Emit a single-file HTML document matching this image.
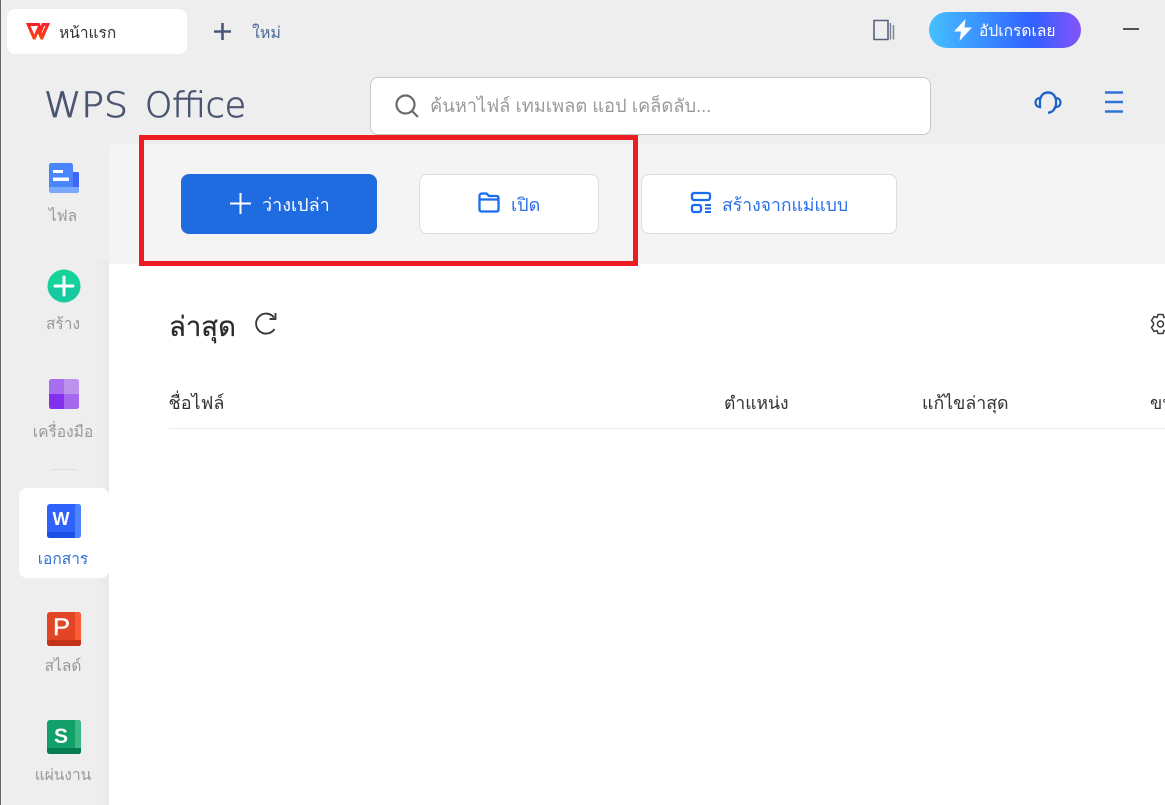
<!DOCTYPE html>
<html lang="th"><head><meta charset="utf-8"><title>WPS Office</title>
<style>
html,body{margin:0;padding:0}
body{width:1165px;height:805px;overflow:hidden;position:relative;background:#eeeeee;font-family:"Liberation Sans","Noto Sans CJK SC","DejaVu Sans",sans-serif;}
.a{position:absolute;white-space:nowrap}
.lbl{position:absolute;width:108px;left:9px;text-align:center;font-size:15.5px;line-height:22px;color:#999;}
svg{position:absolute;overflow:visible}
.btn{position:absolute;top:174px;height:58px;background:#fff;border:1px solid #dcdcdc;border-radius:8px;}
</style></head><body>
<div class="a" style="left:0;top:0;width:1px;height:805px;background:#666"></div>
<div class="a" style="left:94px;top:260px;width:15px;height:545px;background:linear-gradient(90deg,#eeeeee,#e9e9e9)"></div>

<div class="a" style="left:7px;top:9px;width:180px;height:45px;background:#fff;border-radius:8px"></div>
<svg style="left:26px;top:23px" width="24" height="17" viewBox="0 0 24 17"><defs><linearGradient id="wg" x1="0" y1="0" x2="0" y2="1"><stop offset="0" stop-color="#f81a2a"/><stop offset="1" stop-color="#fb4a14"/></linearGradient></defs><path d="M0 0H13.500L14.800 3L16 0H24L17 16.500H14.500L12 10.500L9.500 16.500H7ZM4.500 3L8.300 11.500L12 3ZM16.800 6.500L15.600 9.500L15.900 10.300L19.500 3H18.300Z" fill="url(#wg)" fill-rule="evenodd"/></svg>
<div class="a" style="left:59px;top:23px;font-size:15.5px;line-height:22px;color:#333">หน้าแรก</div>
<svg style="left:213px;top:22px" width="19" height="19"><path d="M9.500 1V18M1 9.500H18" stroke="#4a5878" stroke-width="2.600"/></svg>
<div class="a" style="left:252px;top:22.500px;font-size:16px;line-height:22px;color:#4a6a9a">ใหม่</div>

<svg style="left:873px;top:19px" width="22" height="22"><path d="M1 1.500H15V20.500H1Z" fill="none" stroke="#56637f" stroke-width="1.600"/><path d="M17.500 4V20.500M20.500 6V20.500" stroke="#7a8498" stroke-width="1.400"/></svg>
<div class="a" style="left:929px;top:12px;width:152px;height:36px;border-radius:18px;background:linear-gradient(90deg,#45c0ff 0%,#3a90ff 35%,#3160ff 68%,#8355fa 100%)"></div>
<svg style="left:953px;top:19px" width="20" height="22" viewBox="0 0 20 22"><path d="M12.500 0L1 12.500H8L6.500 22L19 8.500H11.500Z" fill="#fff"/></svg>
<div class="a" style="left:979px;top:21px;font-size:15.600px;line-height:22px;color:#fff">อัปเกรดเลย</div>
<div class="a" style="left:1123px;top:28px;width:16px;height:2px;background:#555"></div>

<svg style="left:45px;top:88px" width="202" height="32"><text x="-1" y="29" font-family="DejaVu Sans, Liberation Sans, sans-serif" font-weight="200" font-size="35" fill="#4a5670" stroke="#4a5670" stroke-width="0.800" textLength="84" lengthAdjust="spacingAndGlyphs">WPS</text><text x="100" y="29" font-family="DejaVu Sans, Liberation Sans, sans-serif" font-weight="200" font-size="35" fill="#4a5670" stroke="#4a5670" stroke-width="0.800" textLength="101" lengthAdjust="spacingAndGlyphs">Office</text></svg>

<div class="a" style="left:370px;top:77px;width:559px;height:56px;background:#fff;border:1px solid #c8c8c8;border-radius:8px"></div>
<svg style="left:395px;top:94px" width="24" height="24"><circle cx="10.500" cy="10.500" r="9" fill="none" stroke="#6a6a6a" stroke-width="2.200"/><path d="M17 17L23 23" stroke="#6a6a6a" stroke-width="2.200"/></svg>
<div class="a" style="left:430px;top:94px;font-size:18.300px;line-height:24px;color:#9a9a9a">ค้นหาไฟล์ เทมเพลต แอป เคล็ดลับ...</div>

<svg style="left:1034px;top:91px" width="28" height="24" viewBox="0 0 28 24"><path d="M6.500 8C7 4 10 1.500 14 1.500S21 4 21.500 8" fill="none" stroke="#1f62c8" stroke-width="2.400"/><path d="M6 6.800C3 7.300 1.500 9 1.500 11.500S3 15.700 6 16.200ZM22 6.800C25 7.300 26.500 9 26.500 11.500S25 15.700 22 16.200Z" fill="none" stroke="#1f62c8" stroke-width="2.200"/><path d="M21.500 15C20.500 19 18.500 21.300 14 21.800" fill="none" stroke="#1f62c8" stroke-width="2.400"/></svg>
<svg style="left:1105px;top:91px" width="18" height="22"><path d="M0 1.500H18M0 11H18M0 20.500H18" stroke="#2f74d8" stroke-width="2.400"/></svg>

<div class="a" style="left:109px;top:144px;width:1056px;height:661px;background:#fff;border-top-left-radius:6px;overflow:hidden"><div style="height:120px;background:#f4f4f4"></div></div>

<div class="a" style="left:181px;top:174px;width:196px;height:60px;background:#1f6be0;border-radius:8px"></div>
<svg style="left:230px;top:193px" width="21" height="21"><path d="M10.500 0V21M0 10.500H21" stroke="#fff" stroke-width="2"/></svg>
<div class="a" style="left:262px;top:192.500px;font-size:18px;line-height:24px;color:#fff">ว่างเปล่า</div>

<div class="btn" style="left:419px;width:178px"></div>
<svg style="left:478px;top:192px" width="22" height="21" viewBox="0 0 22 21"><path d="M1.500 4C1.500 2.500 2.500 1.500 4 1.500H8.500L11 4H18.500C20 4 20.500 5 20.500 6V17.500C20.500 19 19.500 19.500 18.500 19.500H3.500C2.500 19.500 1.500 19 1.500 17.500ZM1.500 7.500H20.500" fill="none" stroke="#1a6cf0" stroke-width="2.300"/></svg>
<div class="a" style="left:511px;top:192.500px;font-size:18px;line-height:24px;color:#2a6fe8">เปิด</div>

<div class="btn" style="left:641px;width:254px"></div>
<svg style="left:690px;top:192px" width="22" height="22"><rect x="2" y="1" width="18" height="7" rx="2" fill="none" stroke="#1a6cf0" stroke-width="2.300"/><rect x="2" y="13" width="9" height="7" rx="2" fill="none" stroke="#1a6cf0" stroke-width="2.300"/><path d="M15 13H21M15 16.500H21M15 20H21" stroke="#1a6cf0" stroke-width="2"/></svg>
<div class="a" style="left:722px;top:192.500px;font-size:17.600px;line-height:24px;color:#2a6fe8">สร้างจากแม่แบบ</div>

<div class="a" style="left:139px;top:135px;width:489px;height:121px;border:5px solid #ed1c24"></div>

<!-- sidebar -->
<svg style="left:49px;top:163px" width="30" height="30"><path d="M24 9H28.500C29.500 9 30 9.500 30 10.500V27C30 29 29 30 27 30H24Z" fill="#3e66f5"/><path d="M2 0H22C23 0 24 1 24 3V30H3C1 30 0 29 0 27V2C0 1 1 0 2 0Z" fill="#4a86fb"/><path d="M0 24H30V27C30 29 29 30 27 30H3C1 30 0 29 0 27Z" fill="#7aa8fc"/><path d="M4 7H14V10H4ZM4 14.500H20V18H4Z" fill="#fff"/></svg>
<div class="lbl" style="top:206px">ไฟล</div>

<svg style="left:47px;top:269px" width="34" height="34"><circle cx="17" cy="17" r="16.500" fill="#14d49c"/><path d="M.8 19A16.500 16.500 0 0 0 33.200 19L33 16.500Z" fill="#17c9a0"/><path d="M17 8V26M8 17H26" stroke="#fff" stroke-width="3" stroke-linecap="round"/></svg>
<div class="lbl" style="top:314px">สร้าง</div>

<svg style="left:49px;top:379px" width="30" height="30"><path d="M3 0H15V15H0V3C0 1 1 0 3 0Z" fill="#a96df0"/><path d="M15 0H27C29 0 30 1 30 3V15H15Z" fill="#bb93ec"/><path d="M0 15H15V30H3C1 30 0 29 0 27Z" fill="#8430ef"/><path d="M15 15H30V27C30 29 29 30 27 30H15Z" fill="#a668ef"/></svg>
<div class="lbl" style="top:422px">เครื่องมือ</div>

<div class="a" style="left:51px;top:469px;width:26px;height:1px;background:#dedede"></div>

<div class="a" style="left:19px;top:488px;width:90px;height:90px;background:#fff;border-radius:8px"></div>
<svg style="left:47px;top:504px" width="34" height="34"><rect width="34" height="34" rx="3" fill="#2f62fb"/><path d="M28 0H31C33 0 34 1 34 3V31C34 33 33 34 31 34H28Z" fill="#4f83fc"/><path d="M0 28H28V34H3C1 34 0 33 0 31Z" fill="#1c50e5"/><text x="14" y="21" text-anchor="middle" font-family="Liberation Sans" font-weight="700" font-size="18" fill="#fff">W</text></svg>
<div class="lbl" style="top:549px;color:#2f6fd8">เอกสาร</div>

<svg style="left:47px;top:612px" width="34" height="34"><rect width="34" height="34" rx="3" fill="#e24526"/><path d="M28 0H31C33 0 34 1 34 3V31C34 33 33 34 31 34H28Z" fill="#fb5d36"/><path d="M0 28H34V31C34 33 33 34 31 34H3C1 34 0 33 0 31Z" fill="#c5321a"/><text x="6" y="23" font-family="Liberation Sans" font-weight="400" font-size="24" fill="#fff" stroke="#fff" stroke-width="0.400" textLength="17" lengthAdjust="spacingAndGlyphs">P</text></svg>
<div class="lbl" style="top:656px">สไลด์</div>

<svg style="left:47px;top:720px" width="34" height="34"><rect width="34" height="34" rx="3" fill="#12a06a"/><path d="M28 0H31C33 0 34 1 34 3V31C34 33 33 34 31 34H28Z" fill="#3db985"/><path d="M0 28H34V31C34 33 33 34 31 34H3C1 34 0 33 0 31Z" fill="#067d50"/><text x="14" y="23" text-anchor="middle" font-family="Liberation Sans" font-weight="700" font-size="21" fill="#fff">S</text></svg>
<div class="lbl" style="top:765px">แผ่นงาน</div>

<!-- content -->
<div class="a" style="left:169px;top:311px;font-size:27.500px;line-height:32px;color:#2b2b2b;-webkit-text-stroke:0.3px #2b2b2b">ล่าสุด</div>
<svg style="left:255px;top:312px" width="22" height="22" viewBox="0 0 22 22"><path d="M19 5.500A10 10 0 1 0 19.500 17" fill="none" stroke="#3a3a3a" stroke-width="1.900"/><path d="M20.500 1V7H14.500" fill="none" stroke="#3a3a3a" stroke-width="1.900"/></svg>
<svg style="left:1150px;top:313px" width="22" height="22" viewBox="0 0 22 22"><circle cx="10.500" cy="11" r="3" fill="none" stroke="#3a3a3a" stroke-width="1.500"/><path d="M8 1.500H13L14 4.500L17 3.500L19.500 7.500L17.500 10V12L19.500 14.500L17 18.500L14 17.500L13 20.500H8L7 17.500L4 18.500L1.500 14.500L3.500 12V10L1.500 7.500L4 3.500L7 4.500Z" fill="none" stroke="#3a3a3a" stroke-width="1.500" stroke-linejoin="round"/></svg>
<div class="a" style="left:168.500px;top:390.500px;font-size:18px;line-height:24px;color:#333">ชื่อไฟล์</div>
<div class="a" style="left:724px;top:390.500px;font-size:17.500px;line-height:24px;color:#333">ตำแหน่ง</div>
<div class="a" style="left:922px;top:390.500px;font-size:17.800px;line-height:24px;color:#333">แก้ไขล่าสุด</div>
<div class="a" style="left:1150px;top:390.500px;font-size:18px;line-height:24px;color:#333">ขนาด</div>
<div class="a" style="left:169px;top:428px;width:996px;height:1px;background:#ececec"></div>
</body></html>
